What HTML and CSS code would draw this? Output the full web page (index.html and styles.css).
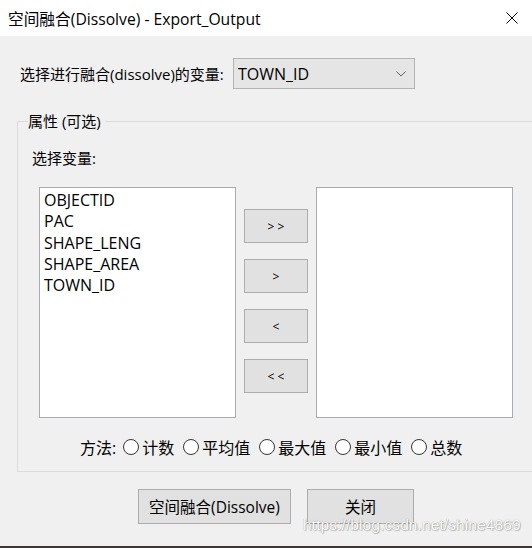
FILE: index.html
```html
<!DOCTYPE html>
<html lang="zh-CN">
  <head>
    <meta charset="UTF-8" />
    <title>空间融合(Dissolve) - Export_Output</title>
    <link rel="stylesheet" href="styles.css">
  </head>
  <body>
    <div class="window">
      <div class="titlebar">
        <span class="title">空间融合(Dissolve) - Export_Output</span>
        <svg class="close-x" width="12" height="12" viewBox="0 0 12 12">
          <path d="M0.5 0.5 L11.5 11.5 M11.5 0.5 L0.5 11.5" stroke="#000" stroke-width="1" fill="none" />
        </svg>
      </div>

      <div class="client">
        <div class="var-row">
          <label class="var-label">选择进行融合(dissolve)的变量:</label>
          <div class="combo">
            <span>TOWN_ID</span>
            <svg width="10" height="6" viewBox="0 0 10 6">
              <path d="M0.5 0.5 L5 5 L9.5 0.5" stroke="#606060" stroke-width="1" fill="none" />
            </svg>
          </div>
        </div>

        <fieldset class="group">
          <legend>属性 (可选)</legend>
          <div class="pick-label">选择变量:</div>

          <div class="lists">
            <ul class="listbox">
              <li>OBJECTID</li>
              <li>PAC</li>
              <li>SHAPE_LENG</li>
              <li>SHAPE_AREA</li>
              <li>TOWN_ID</li>
            </ul>

            <div class="move-btns">
              <button class="btn small">&gt; &gt;</button>
              <button class="btn small">&gt;</button>
              <button class="btn small">&lt;</button>
              <button class="btn small">&lt; &lt;</button>
            </div>

            <ul class="listbox"></ul>
          </div>

          <div class="methods">
            <span class="methods-label">方法:</span>
            <label class="radio"><span class="dot"></span>计数</label>
            <label class="radio"><span class="dot"></span>平均值</label>
            <label class="radio"><span class="dot"></span>最大值</label>
            <label class="radio"><span class="dot"></span>最小值</label>
            <label class="radio"><span class="dot"></span>总数</label>
          </div>
        </fieldset>

        <div class="actions">
          <button class="btn wide">空间融合(Dissolve)</button>
          <button class="btn close">关闭</button>
        </div>
      </div>

      <div class="watermark">https://blog.csdn.net/shine4869</div>
      <div class="bottom-edge"></div>
    </div>
  </body>
</html>
```

FILE: styles.css
```css
* {
  margin: 0;
  padding: 0;
  box-sizing: border-box;
}

body {
  font-family: "Open Sans", "Noto Sans CJK SC", sans-serif;
  font-size: 15px;
  color: #000;
  background: #f0f0f0;
  width: 532px;
  height: 548px;
  overflow: hidden;
}

.window {
  position: relative;
  width: 532px;
  height: 548px;
  overflow: hidden;
  background: #f0f0f0;
}

.titlebar {
  height: 36px;
  background: #fff;
  display: flex;
  align-items: center;
  justify-content: space-between;
  padding: 0 14px 0 8px;
}

.title {
  font-size: 15.7px;
}

.client {
  padding-top: 22px;
}

.var-row {
  display: flex;
  align-items: center;
  padding-left: 20px;
  height: 31px;
}

.var-label {
  width: 213px;
  white-space: nowrap;
}

.combo {
  width: 182px;
  height: 31px;
  background: #e5e5e5;
  border: 1px solid #b4b4b4;
  display: flex;
  align-items: center;
  justify-content: space-between;
  padding: 0 8px 0 4px;
  font-size: 16px;
}

.group {
  margin: 22px 0 0 17px;
  width: 540px;
  border: 1px solid #dcdcdc;
  border-right: none;
  padding: 0 0 0 14px;
  height: 361px;
}

.group legend {
  margin-left: -4px;
  padding: 0 4px 0 0;
  line-height: 20px;
}

.pick-label {
  margin-top: 17px;
  line-height: 20px;
}

.lists {
  display: flex;
  gap: 8px;
  margin: 19px 0 0 7px;
}

.listbox {
  list-style: none;
  width: 197px;
  height: 231px;
  background: #fff;
  border: 1px solid #a9acb0;
  padding: 2px 0 0 4px;
  line-height: 21.3px;
  font-size: 16px;
}

.move-btns {
  display: flex;
  flex-direction: column;
  gap: 16px;
  padding-top: 22px;
}

.btn {
  font: inherit;
  font-size: 15.5px;
  color: #000;
  background: #e1e1e1;
  border: 1px solid #adadad;
}

.btn.small {
  width: 64px;
  height: 34px;
  font-size: 12px;
}

.methods {
  display: flex;
  align-items: center;
  margin: 19px 0 0 48px;
  height: 20px;
  font-size: 16px;
}

.methods-label {
  margin-right: 7px;
}

.radio {
  display: flex;
  align-items: center;
  margin-right: 9px;
}

.dot {
  width: 16px;
  height: 16px;
  border: 1px solid #333;
  border-radius: 50%;
  background: #fff;
  margin-right: 3px;
}

.actions {
  display: flex;
  gap: 16px;
  padding: 17px 0 0 138px;
}

.btn.wide {
  width: 153px;
  height: 35px;
}

.btn.close {
  width: 107px;
  height: 35px;
}

/* blog watermark pasted over the screenshot */
.watermark {
  position: absolute;
  left: 303px;
  top: 516px;
  font-family: "Liberation Sans", sans-serif;
  font-size: 15.5px;
  letter-spacing: 0.1px;
  color: #fff;
  text-shadow: 0 0 1px rgba(0, 0, 0, 0.45), 1px 1px 1px rgba(0, 0, 0, 0.2);
}

.bottom-edge {
  position: absolute;
  left: 0;
  bottom: 0;
  width: 100%;
  height: 2px;
  background: #3b3631;
}
```
